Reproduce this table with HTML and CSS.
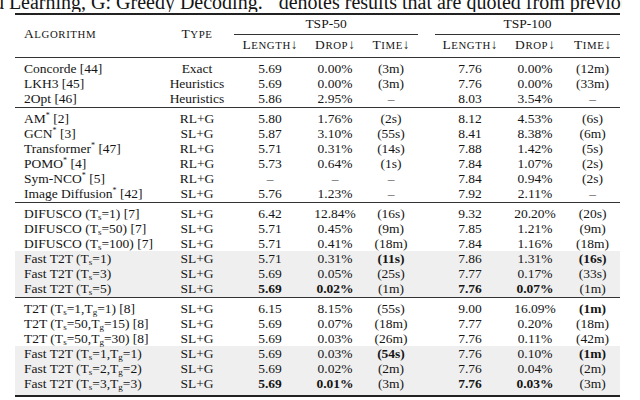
FILE: index.html
```html
<!DOCTYPE html>
<html lang="en">
<head>
<meta charset="utf-8">
<title>TSP results</title>
<link rel="stylesheet" href="styles.css">
</head>
<body>
<div class="caption-wrap"><div class="caption">Supervised Learning, G: Greedy Decoding. <span class="ast">*</span> denotes results that are quoted from previous works.</div></div>
<table class="results">
  <colgroup>
    <col class="c-alg"><col class="c-type"><col class="c-l50"><col class="c-d50"><col class="c-t50"><col class="c-gap"><col class="c-l100"><col class="c-d100"><col class="c-t100">
  </colgroup>
  <thead>
    <tr class="h1">
      <th rowspan="2" class="sc alg hrule mid">Algorithm</th>
      <th rowspan="2" class="sc hrule mid">Type</th>
      <th colspan="3" class="grp">TSP-50</th>
      <th class="gap"></th>
      <th colspan="3" class="grp">TSP-100</th>
    </tr>
    <tr class="h2">
      <th class="sc hrule">Length<span class="arr">↓</span></th>
      <th class="sc hrule">Drop<span class="arr">↓</span></th>
      <th class="sc hrule">Time<span class="arr">↓</span></th>
      <th class="hrule"></th>
      <th class="sc hrule">Length<span class="arr">↓</span></th>
      <th class="sc hrule">Drop<span class="arr">↓</span></th>
      <th class="sc hrule">Time<span class="arr">↓</span></th>
    </tr>
  </thead>
  <tbody>
    <tr class="first"><td class="alg">Concorde [44]</td><td>Exact</td><td>5.69</td><td>0.00%</td><td>(3m)</td><td></td><td>7.76</td><td>0.00%</td><td>(12m)</td></tr>
    <tr><td class="alg">LKH3 [45]</td><td>Heuristics</td><td>5.69</td><td>0.00%</td><td>(3m)</td><td></td><td>7.76</td><td>0.00%</td><td>(33m)</td></tr>
    <tr class="last"><td class="alg">2Opt [46]</td><td>Heuristics</td><td>5.86</td><td>2.95%</td><td class="dash">–</td><td></td><td>8.03</td><td>3.54%</td><td class="dash">–</td></tr>
  </tbody>
  <tbody>
    <tr class="first"><td class="alg">AM<span class="ast">*</span> [2]</td><td>RL+G</td><td>5.80</td><td>1.76%</td><td>(2s)</td><td></td><td>8.12</td><td>4.53%</td><td>(6s)</td></tr>
    <tr><td class="alg">GCN<span class="ast">*</span> [3]</td><td>SL+G</td><td>5.87</td><td>3.10%</td><td>(55s)</td><td></td><td>8.41</td><td>8.38%</td><td>(6m)</td></tr>
    <tr><td class="alg">Transformer<span class="ast">*</span> [47]</td><td>RL+G</td><td>5.71</td><td>0.31%</td><td>(14s)</td><td></td><td>7.88</td><td>1.42%</td><td>(5s)</td></tr>
    <tr><td class="alg">POMO<span class="ast">*</span> [4]</td><td>RL+G</td><td>5.73</td><td>0.64%</td><td>(1s)</td><td></td><td>7.84</td><td>1.07%</td><td>(2s)</td></tr>
    <tr><td class="alg">Sym-NCO<span class="ast">*</span> [5]</td><td>RL+G</td><td class="dash">–</td><td class="dash">–</td><td class="dash">–</td><td></td><td>7.84</td><td>0.94%</td><td>(2s)</td></tr>
    <tr class="last"><td class="alg">Image Diffusion<span class="ast">*</span> [42]</td><td>SL+G</td><td>5.76</td><td>1.23%</td><td class="dash">–</td><td></td><td>7.92</td><td>2.11%</td><td class="dash">–</td></tr>
  </tbody>
  <tbody>
    <tr class="first"><td class="alg">DIFUSCO (T<span class="sb">s</span>=1) [7]</td><td>SL+G</td><td>6.42</td><td>12.84%</td><td>(16s)</td><td></td><td>9.32</td><td>20.20%</td><td>(20s)</td></tr>
    <tr><td class="alg">DIFUSCO (T<span class="sb">s</span>=50) [7]</td><td>SL+G</td><td>5.71</td><td>0.45%</td><td>(9m)</td><td></td><td>7.85</td><td>1.21%</td><td>(9m)</td></tr>
    <tr><td class="alg">DIFUSCO (T<span class="sb">s</span>=100) [7]</td><td>SL+G</td><td>5.71</td><td>0.41%</td><td>(18m)</td><td></td><td>7.84</td><td>1.16%</td><td>(18m)</td></tr>
    <tr class="ours"><td class="alg">Fast T2T (T<span class="sb">s</span>=1)</td><td>SL+G</td><td>5.71</td><td>0.31%</td><td class="b">(11s)</td><td></td><td>7.86</td><td>1.31%</td><td class="b">(16s)</td></tr>
    <tr class="ours"><td class="alg">Fast T2T (T<span class="sb">s</span>=3)</td><td>SL+G</td><td>5.69</td><td>0.05%</td><td>(25s)</td><td></td><td>7.77</td><td>0.17%</td><td>(33s)</td></tr>
    <tr class="ours last"><td class="alg">Fast T2T (T<span class="sb">s</span>=5)</td><td>SL+G</td><td class="b">5.69</td><td class="b">0.02%</td><td>(1m)</td><td></td><td class="b">7.76</td><td class="b">0.07%</td><td>(1m)</td></tr>
  </tbody>
  <tbody class="end">
    <tr class="first"><td class="alg">T2T (T<span class="sb">s</span>=1,T<span class="sb">g</span>=1) [8]</td><td>SL+G</td><td>6.15</td><td>8.15%</td><td>(55s)</td><td></td><td>9.00</td><td>16.09%</td><td class="b">(1m)</td></tr>
    <tr><td class="alg">T2T (T<span class="sb">s</span>=50,T<span class="sb">g</span>=15) [8]</td><td>SL+G</td><td>5.69</td><td>0.07%</td><td>(18m)</td><td></td><td>7.77</td><td>0.20%</td><td>(18m)</td></tr>
    <tr><td class="alg">T2T (T<span class="sb">s</span>=50,T<span class="sb">g</span>=30) [8]</td><td>SL+G</td><td>5.69</td><td>0.03%</td><td>(26m)</td><td></td><td>7.76</td><td>0.11%</td><td>(42m)</td></tr>
    <tr class="ours"><td class="alg">Fast T2T (T<span class="sb">s</span>=1,T<span class="sb">g</span>=1)</td><td>SL+G</td><td>5.69</td><td>0.03%</td><td class="b">(54s)</td><td></td><td>7.76</td><td>0.10%</td><td class="b">(1m)</td></tr>
    <tr class="ours"><td class="alg">Fast T2T (T<span class="sb">s</span>=2,T<span class="sb">g</span>=2)</td><td>SL+G</td><td>5.69</td><td>0.02%</td><td>(2m)</td><td></td><td>7.76</td><td>0.04%</td><td>(2m)</td></tr>
    <tr class="ours last"><td class="alg">Fast T2T (T<span class="sb">s</span>=3,T<span class="sb">g</span>=3)</td><td>SL+G</td><td class="b">5.69</td><td class="b">0.01%</td><td>(3m)</td><td></td><td class="b">7.76</td><td class="b">0.03%</td><td>(3m)</td></tr>
  </tbody>
</table>
</body>
</html>
```
FILE: styles.css
```css
html, body {
  margin: 0;
  padding: 0;
  background: #ffffff;
  overflow: hidden;
}
body {
  font-family: "Liberation Serif", "Times New Roman", serif;
  color: #151515;
}
.caption-wrap {
  width: 622px;
  height: 12px;
  overflow: hidden;
}
.caption {
  font-size: 20px;
  line-height: 20px;
  white-space: nowrap;
  text-indent: -85px;
  margin-top: -8px;
}
.caption .ast {
  font-size: 12px;
  vertical-align: 8px;
  line-height: 0;
}
.results {
  margin: 1px 0 0 15px;
  width: 605px;
  table-layout: fixed;
  border-collapse: separate;
  border-spacing: 0;
  border-top: 2px solid #222;
  border-bottom: 2px solid #222;
  font-size: 13.5px;
}
.c-alg { width: 145px; }
.c-type { width: 74px; }
.c-l50 { width: 72px; }
.c-d50 { width: 58px; }
.c-t50 { width: 54px; }
.c-gap { width: 17px; }
.c-l100 { width: 70px; }
.c-d100 { width: 60px; }
.c-t100 { width: 55px; }

th, td {
  padding: 0;
  line-height: 15px;
  text-align: center;
  white-space: nowrap;
}
th {
  font-weight: normal;
}
th.sc {
  font-size: 10.8px;
  text-transform: uppercase;
  letter-spacing: 0.6px;
}
th.sc::first-letter {
  font-size: 13.5px;
}
th.sc .arr {
  font-size: 13.5px;
  letter-spacing: 0;
}
.h1 th { padding-top: 1px; padding-bottom: 3px; }
.h1 th.grp { border-bottom: 1px solid #333; }
.h1 th.mid { padding-bottom: 4px; padding-top: 0; }
.h2 th { padding-top: 2px; padding-bottom: 4px; }
th.hrule { border-bottom: 1px solid #333; }
th.alg, td.alg { text-align: left; padding-left: 9px; }

tbody tr.first td { padding-top: 2.5px; }
tbody tr.last td { padding-bottom: 1.5px; border-bottom: 1px solid #333; }
tbody.end tr.last td { border-bottom: none; padding-bottom: 4.5px; }

tr.ours td { background: #efefef; }
td.b { font-weight: bold; }
td.dash { color: #555; }

.ast {
  font-size: 8px;
  vertical-align: 5px;
  line-height: 0;
}
.sb {
  font-size: 9px;
  vertical-align: -2px;
  line-height: 0;
}
```
